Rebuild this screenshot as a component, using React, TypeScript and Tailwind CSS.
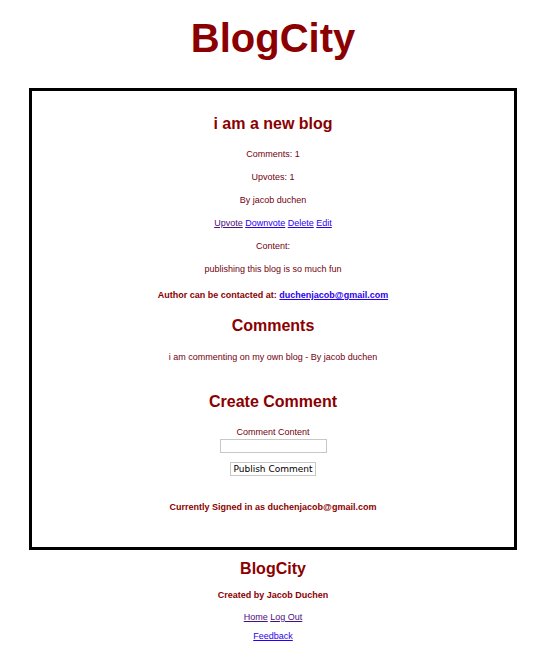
import type { ReactNode } from 'react';

function Heading({ children }: { children: ReactNode }) {
  return <h2 className="text-[16px] leading-5 font-bold">{children}</h2>;
}

function Link({ children, visited = false, href = '#' }: { children: ReactNode; visited?: boolean; href?: string }) {
  return (
    <a href={href} className={visited ? 'text-[#4a1080] underline' : 'text-[#2a00f0] underline'}>
      {children}
    </a>
  );
}

export default function App() {
  return (
    <div className="bg-white pt-3.5 pr-10 pb-2.5 pl-[29px] text-center font-['Liberation_Sans',Arial,sans-serif] text-[9px] leading-3 text-[#8b0000]">
      <header>
        <h1 className="text-[40px] leading-12 font-bold">BlogCity</h1>
      </header>

      <main className="mt-[26px] border-3 border-black pt-[23px] pb-[34px]">
        <article>
          <Heading>i am a new blog</Heading>
          <div className="mt-3.5 flex flex-col gap-[11px] text-[#730010]">
            <p>Comments: 1</p>
            <p>Upvotes: 1</p>
            <p>By jacob duchen</p>
            <p>
              <Link visited>Upvote</Link> <Link>Downvote</Link> <Link>Delete</Link> <Link>Edit</Link>
            </p>
            <p>Content:</p>
            <p>publishing this blog is so much fun</p>
          </div>
          <p className="mt-3.5 font-bold">
            Author can be contacted at: <Link href="mailto:duchenjacob@gmail.com">duchenjacob@gmail.com</Link>
          </p>
        </article>

        <section className="mt-[15px]">
          <Heading>Comments</Heading>
          <p className="mt-[15px] text-[#730010]">i am commenting on my own blog - By jacob duchen</p>
        </section>

        <section className="mt-[29px]">
          <Heading>Create Comment</Heading>
          <form className="mt-3.5 flex flex-col items-center" onSubmit={(event) => event.preventDefault()}>
            <label htmlFor="comment" className="text-[#730010]">
              Comment Content
            </label>
            <input id="comment" type="text" className="mt-px h-3.5 w-[107px] border border-[#c8c8c8] bg-white px-1 text-black" />
            <button
              type="submit"
              className="mt-[9px] flex h-3.5 w-[86px] items-center justify-center border border-[#c8c8c8] bg-white font-['DejaVu_Sans',sans-serif] text-[9px] leading-3 whitespace-nowrap text-black"
            >
              Publish Comment
            </button>
          </form>
        </section>

        <p className="mt-[25px] font-bold">Currently Signed in as duchenjacob@gmail.com</p>
      </main>

      <footer className="mt-[9px]">
        <Heading>BlogCity</Heading>
        <p className="mt-2.5 font-bold">Created by Jacob Duchen</p>
        <nav className="mt-2.5">
          <p>
            <Link visited>Home</Link> <Link visited>Log Out</Link>
          </p>
          <p className="mt-[7px]">
            <Link>Feedback</Link>
          </p>
        </nav>
      </footer>
    </div>
  );
}
